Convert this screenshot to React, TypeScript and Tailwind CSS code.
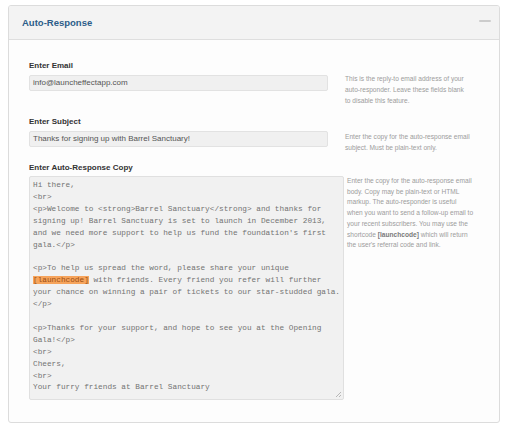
import React from "react";

const copyBefore = `Hi there,
<br>
<p>Welcome to <strong>Barrel Sanctuary</strong> and thanks for
signing up! Barrel Sanctuary is set to launch in December 2013,
and we need more support to help us fund the foundation's first
gala.</p>

<p>To help us spread the word, please share your unique
`;

const copyAfter = ` with friends. Every friend you refer will further
your chance on winning a pair of tickets to our star-studded gala.
</p>

<p>Thanks for your support, and hope to see you at the Opening
Gala!</p>
<br>
Cheers,
<br>
Your furry friends at Barrel Sanctuary`;

const sans = "font-['Helvetica_Neue','Liberation_Sans',Arial,sans-serif]";

const Help = ({ lines, className }: { lines: React.ReactNode[]; className: string }) => (
  <div className={`text-[6.6px] text-[#9c9c9c] whitespace-nowrap ${className}`}>
    {lines.map((l, i) => (
      <div key={i}>{l}</div>
    ))}
  </div>
);

const App = () => {
  return (
    <div className={`w-[508px] h-[431px] bg-white pt-[5px] pl-[8px] ${sans}`}>
      <div className="w-[492px] h-[418px] border border-[#dcdcdc] rounded-[3px] bg-[#fdfdfd] flex flex-col overflow-hidden">
        {/* Header */}
        <div className="h-[34px] shrink-0 bg-[#f3f3f3] border-b border-[#dedede] flex items-center justify-between pl-[13px] pr-[8px]">
          <h2 className="text-[9.5px] font-bold text-[#2c5d89] leading-none">
            Auto-Response
          </h2>
          <span className="w-[12px] h-[2px] bg-[#cccccc] rounded-full mb-[4px]" />
        </div>

        {/* Body */}
        <div className="pl-[20px] pt-[20px]">
          {/* Email */}
          <div className="flex items-start">
            <div className="w-[316px]">
              <label className="block text-[8px] font-bold text-[#333] leading-[12px]">
                Enter Email
              </label>
              <div className="mt-[3px] w-[299px] h-[16px] bg-[#f0f0f0] border border-[#e2e2e2] rounded-[2px] pl-[3px] text-[8px] leading-[14px] text-[#555]">
                info@launcheffectapp.com
              </div>
            </div>
            <Help
              className="pt-[12.5px] leading-[11px]"
              lines={[
                "This is the reply-to email address of your",
                "auto-responder. Leave these fields blank",
                "to disable this feature.",
              ]}
            />
          </div>

          {/* Subject */}
          <div className="flex items-start mt-[10px]">
            <div className="w-[316px]">
              <label className="block text-[8px] font-bold text-[#333] leading-[12px]">
                Enter Subject
              </label>
              <div className="mt-[3px] w-[299px] h-[16px] bg-[#f0f0f0] border border-[#e2e2e2] rounded-[2px] pl-[3px] text-[8px] leading-[14px] text-[#555]">
                Thanks for signing up with Barrel Sanctuary!
              </div>
            </div>
            <Help
              className="pt-[15.5px] leading-[11px]"
              lines={[
                "Enter the copy for the auto-response email",
                "subject. Must be plain-text only.",
              ]}
            />
          </div>

          {/* Copy */}
          <div className="flex items-start mt-[9px]">
            <div className="w-[317px]">
              <label className="block text-[8px] font-bold text-[#333] leading-[12px]">
                Enter Auto-Response Copy
              </label>
              <div className="relative mt-[2px] w-[315px] h-[224px] bg-[#f1f1f1] border border-[#e0e0e0] rounded-[2px] pt-[3px] pl-[3px] overflow-hidden">
                <pre className="font-['Courier_New','Liberation_Mono',monospace] text-[7.75px] leading-[11.9px] text-[#737373] whitespace-pre">
                  {copyBefore}
                  <span className="bg-[#f6a45c] text-[#9a4d12]">[launchcode]</span>
                  {copyAfter}
                </pre>
                <svg
                  className="absolute right-[1px] bottom-[1px]"
                  width="7"
                  height="7"
                  viewBox="0 0 7 7"
                >
                  <path d="M6 1L1 6M6 4L4 6" stroke="#a8a8a8" strokeWidth="0.8" />
                </svg>
              </div>
            </div>
            <Help
              className="pt-[14px] pl-[1px] leading-[10.7px]"
              lines={[
                "Enter the copy for the auto-response email",
                "body. Copy may be plain-text or HTML",
                "markup. The auto-responder is useful",
                "when you want to send a follow-up email to",
                "your recent subscribers. You may use the",
                <>
                  shortcode <span className="font-bold text-[#7a7a7a]">[launchcode]</span> which will return
                </>,
                "the user's referral code and link.",
              ]}
            />
          </div>
        </div>
      </div>
    </div>
  );
};

export default App;
